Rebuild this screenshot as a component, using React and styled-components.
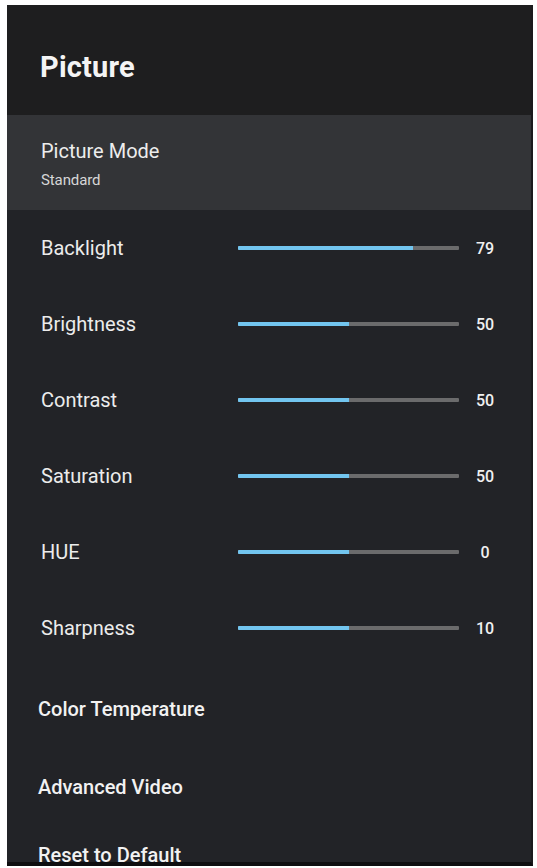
import React from 'react';
import styled, { createGlobalStyle } from 'styled-components';

const GlobalStyle = createGlobalStyle`
  html, body {
    margin: 0;
    padding: 0;
    background: #ffffff;
  }
  body {
    font-family: Roboto, "Liberation Sans", sans-serif;
  }
`;

const Page = styled.div`
  padding: 5px 4px 0 7px;
`;

const Panel = styled.div`
  width: 526px;
  height: 861px;
  background: #222327;
  border-right: 2px solid #1b1b1d;
  border-bottom: 4px solid #0e0e10;
  box-sizing: border-box;
  overflow: hidden;
  display: flex;
  flex-direction: column;
  color: #f2f2f2;
`;

const Header = styled.div`
  height: 110px;
  flex-shrink: 0;
  background: #1e1e1f;
  display: flex;
  align-items: center;
  padding-left: 33px;
  padding-top: 14px;
  box-sizing: border-box;
`;

const Title = styled.h1`
  margin: 0;
  font-size: 29px;
  font-weight: 700;
  color: #f4f4f4;
  letter-spacing: 0.2px;
`;

const ModeRow = styled.div`
  height: 95px;
  flex-shrink: 0;
  background: #333437;
  display: flex;
  flex-direction: column;
  justify-content: center;
  padding-left: 34px;
  padding-top: 2px;
  box-sizing: border-box;
`;

const ModeLabel = styled.div`
  font-size: 20px;
  color: #ededed;
`;

const ModeValue = styled.div`
  font-size: 15px;
  color: #d6d6d6;
  margin-top: 8px;
  letter-spacing: -0.1px;
`;

const SliderRow = styled.div`
  height: 76px;
  flex-shrink: 0;
  display: grid;
  grid-template-columns: 197px 221px 52px;
  align-items: center;
  padding-left: 34px;
  box-sizing: border-box;
`;

const Label = styled.div`
  font-size: 20px;
  color: #ececec;
`;

const Track = styled.div`
  height: 4px;
  background: #6b6b6c;
  border-radius: 1px;
  overflow: hidden;
`;

const Fill = styled.div`
  height: 100%;
  background: #72c5ef;
`;

const Value = styled.div`
  font-size: 16px;
  font-weight: 500;
  color: #f0f0f0;
  text-align: center;
`;

const LinkRow = styled.div`
  height: ${(p) => (p.$short ? 66 : 78)}px;
  flex-shrink: 0;
  display: flex;
  align-items: center;
  padding: ${(p) => (p.$short ? 0 : 8)}px 0 0 31px;
  box-sizing: border-box;
  font-size: 20px;
  font-weight: 500;
  color: #f2f2f2;
`;

const sliders = [
  { name: 'Backlight', value: 79, fill: 79 },
  { name: 'Brightness', value: 50, fill: 50 },
  { name: 'Contrast', value: 50, fill: 50 },
  { name: 'Saturation', value: 50, fill: 50 },
  { name: 'HUE', value: 0, fill: 50 },
  { name: 'Sharpness', value: 10, fill: 50 },
];

const links = ['Color Temperature', 'Advanced Video', 'Reset to Default'];

export default function App() {
  return (
    <Page>
      <GlobalStyle />
      <Panel>
        <Header>
          <Title>Picture</Title>
        </Header>
        <ModeRow>
          <ModeLabel>Picture Mode</ModeLabel>
          <ModeValue>Standard</ModeValue>
        </ModeRow>
        {sliders.map((s) => (
          <SliderRow key={s.name}>
            <Label>{s.name}</Label>
            <Track>
              <Fill style={{ width: `${s.fill}%` }} />
            </Track>
            <Value>{s.value}</Value>
          </SliderRow>
        ))}
        {links.map((l, i) => (
          <LinkRow key={l} $short={i === links.length - 1}>{l}</LinkRow>
        ))}
      </Panel>
    </Page>
  );
}
